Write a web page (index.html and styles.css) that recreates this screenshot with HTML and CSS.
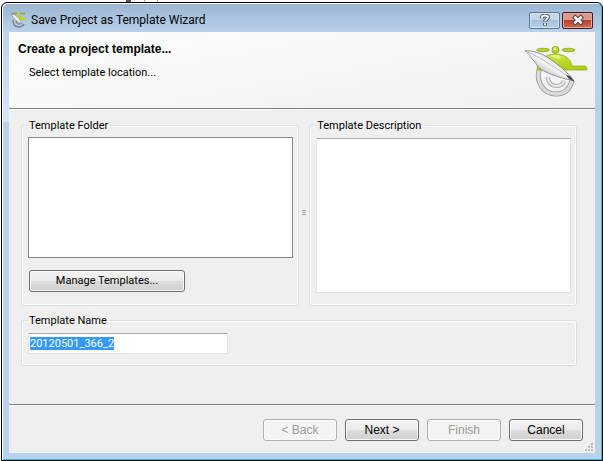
FILE: index.html
```html
<!DOCTYPE html>
<html lang="en">
<head>
<meta charset="utf-8">
<title>Save Project as Template Wizard</title>
<link rel="stylesheet" href="styles.css">
</head>
<body>
<div class="backdrop" aria-hidden="true"><i class="bar"></i><i class="page"></i></div>
<main class="window">
  <header class="titlebar">
    <svg class="app-icon" viewBox="0 0 16 16" aria-hidden="true">
      <path d="M2 8C2 12 4 15 8 15C10 15 12 14 13 12" fill="none" stroke="#7d8188" stroke-width="1.500"/>
      <path d="M5 9C5 11 7 12.500 9 12" fill="none" stroke="#6c7077"/>
      <path d="M4 7C5 3.500 10 3 12 6L16 6.500V8H4Z" fill="#bdd41f"/>
      <path d="M1 1.500H6M9 1.500H14" stroke="#93a51c" stroke-width="1.500"/>
      <circle cx="7.500" cy="2" r="1.500" fill="#bdd41f"/>
      <path d="M0 2C4 2 8 5 11 12C6 10 3 7 0 2Z" fill="#eef0f4" stroke="#777a82" stroke-width=".6"/>
    </svg>
    <span class="title">Save Project as Template Wizard</span>
    <button class="caption" aria-label="Help"><svg viewBox="0 0 12 12"><path d="M3 4.300V3Q3 1.500 6 1.500T9 3.500C9 5 6 5.500 6 7.500M6 9V11.500" fill="none" stroke="#46505c" stroke-width="3.800"/><path d="M3 4V3Q3 1.500 6 1.500T9 3.500C9 5 6 5.500 6 7.300M6 9.300V11" fill="none" stroke="#fff" stroke-width="1.800"/></svg></button>
    <button class="caption close" aria-label="Close"><svg viewBox="0 0 12 12"><path d="M1.500 2L10.500 10M10.500 2L1.500 10" stroke="#5b4148" stroke-width="4.600"/><path d="M2.300 2.700L9.700 9.300M9.700 2.700L2.300 9.300" stroke="#fff" stroke-width="2.600"/></svg></button>
  </header>
  <div class="client">
    <section class="banner">
      <div class="banner-text">
        <h1>Create a project template...</h1>
        <p>Select template location...</p>
      </div>
      <svg class="logo" viewBox="0 0 64 52" aria-hidden="true">
        <defs>
          <linearGradient id="green" x1="0" y1="0" x2="0" y2="1"><stop offset="0" stop-color="#cfe644"/><stop offset="1" stop-color="#a9cb12"/></linearGradient>
          <linearGradient id="quill" x1="0" y1="1" x2="1" y2="0"><stop offset=".2" stop-color="#a3a5ae"/><stop offset=".5" stop-color="#f4f5f7"/><stop offset="1" stop-color="#c9cbd2"/></linearGradient>
        </defs>
        <path d="M14 24C11 37 19 48 31 48C40 48 45 42 47 35" fill="none" stroke="#96989e" stroke-width="5"/>
        <path d="M14 24C11 37 19 48 31 48C40 48 45 42 47 35" fill="none" stroke="#d9dbdf" stroke-width="3.400"/>
        <path d="M23 31C23 37 27 40 31 40C35 40 38 38 39 35" fill="none" stroke="#a0a2a8" stroke-width="4"/>
        <path d="M23 31C23 37 27 40 31 40C35 40 38 38 39 35" fill="none" stroke="#e4e5e9" stroke-width="2.400"/>
        <path d="M12 24C13 15 18 11 24 9Q30 7 37 9C43 11 46 15 47 20H60Q62 20 62 24Z" fill="url(#green)" stroke="#94b01c" stroke-width=".8"/>
        <path d="M25 10Q31 7 37 11Q33 15 25 10Z" fill="#ecf6a8" opacity=".7"/>
        <ellipse cx="18" cy="4" rx="6.500" ry="1.700" fill="#b5d12b" stroke="#8aa51e" stroke-width=".8"/>
        <ellipse cx="43.500" cy="4" rx="6.500" ry="1.700" fill="#b5d12b" stroke="#8aa51e" stroke-width=".8"/>
        <circle cx="30.500" cy="4" r="3.600" fill="#b5d12b" stroke="#8aa51e" stroke-width=".8"/>
        <circle cx="30" cy="3" r="1.400" fill="#e6f39a"/>
        <path d="M0 5C6 4 17 7 25 13C35 20 42 26 49 35C38 32 24 29 14 22C11 19 11 16 8 14C5 11 5 8 0 5Z" fill="url(#quill)" stroke="#777a82" stroke-width=".8"/>
        <path d="M3 6C18 13 34 24 46 33" fill="none" stroke="#a6a9b0" stroke-width=".7"/>
        <path d="M41 29L45 30L50 36L44 33Z" fill="#45484f"/>
      </svg>
    </section>
    <form class="body" onsubmit="return false">
      <div class="split">
        <fieldset class="group folder">
          <legend id="folder-label">Template Folder</legend>
          <div class="list" role="listbox" aria-labelledby="folder-label" tabindex="0"></div>
          <button type="button" class="btn manage">Manage Templates...</button>
        </fieldset>
        <div class="grip" role="separator" aria-orientation="vertical"><i></i><i></i><i></i></div>
        <fieldset class="group description">
          <legend><label for="description">Template Description</label></legend>
          <textarea id="description"></textarea>
        </fieldset>
      </div>
      <fieldset class="group name">
        <legend><label for="name">Template Name</label></legend>
        <input id="name" type="text" value="20120501_366_2" autofocus>
      </fieldset>
    </form>
    <footer class="actions">
      <button class="btn" disabled>&lt; Back</button>
      <button class="btn">Next &gt;</button>
      <button class="btn" disabled>Finish</button>
      <button class="btn">Cancel</button>
      <svg class="sizer" viewBox="0 0 8 8" aria-hidden="true"><path d="M6 0h2v2h-2zM3 3h2v2h-2zM6 3h2v2h-2zM0 6h2v2h-2zM3 6h2v2h-2zM6 6h2v2h-2z" fill="#bdbdbd"/></svg>
    </footer>
  </div>
</main>
<script src="app.js"></script>
</body>
</html>
```
FILE: styles.css
```css
* { box-sizing: border-box; }
html, body { height: 100%; }
body {
  margin: 0;
  padding: 2px 0 0 1px;
  background: #fff;
  color: #000;
  font: 11px/14px Roboto, sans-serif;
  overflow: hidden;
}
.backdrop { position: absolute; top: 0; left: 126px; display: flex; gap: 13px; }
.bar { width: 5px; height: 2px; background: #555; }
.page { width: 14px; height: 2px; border: solid #aaa; border-width: 0 1px; }
.window {
  height: 100%;
  display: flex;
  flex-direction: column;
  padding: 0 7px 7px;
  border: 1px solid #000;
  border-radius: 6px 6px 0 0;
  background:
    linear-gradient(transparent 20px, #d9e6f6) 0 0 / 8px 119px no-repeat,
    linear-gradient(#9ab4d2, #b9d1ea 29px, #b9d1ea);
  box-shadow: inset 1px 1px #fff, inset -1px -1px #35b9dc;
}
.titlebar {
  flex: none;
  height: 29px;
  display: flex;
  align-items: center;
  gap: 2px;
  padding: 5px 2px 0 2px;
}
.app-icon { width: 16px; height: 16px; margin-right: 2px; }
.title { flex: 1; font: 12px/16px Roboto, sans-serif; }
.caption {
  width: 31px;
  height: 17px;
  display: grid;
  place-items: center;
  padding: 0;
  border: 1px solid #5c7693;
  border-radius: 2px;
  background: linear-gradient(#c4d6ea 45%, #a6bfdb 50%, #b9d0e9);
  box-shadow: inset 0 0 0 1px #d5e3f2;
}
.caption svg { width: 12px; height: 12px; }
.close {
  border-color: #4c1620;
  background: linear-gradient(#d99a8e 45%, #b9422e 50%, #cc6a55);
  box-shadow: inset 0 0 0 1px #e0aaa0;
}
.client {
  flex: 1;
  display: flex;
  flex-direction: column;
  background: #efefef;
}
.banner {
  flex: none;
  height: 76px;
  display: flex;
  justify-content: space-between;
  padding: 10px 6px 0 9px;
  background: linear-gradient(170deg, #fdfdfd, #f0f0f0);
}
h1 { margin: 0; font: bold 12px/14px "Liberation Sans", sans-serif; }
p { margin: 10px 0 0 11px; }
.logo { width: 64px; height: 52px; margin-top: 4px; }
.body {
  flex: 1;
  display: flex;
  flex-direction: column;
  gap: 7px;
  padding: 9px 18px 38px 12px;
  border-top: 1px solid #808080;
  box-shadow: inset 0 1px #fff;
}
.split { flex: 1; display: flex; }
.group {
  min-width: 0;
  margin: 0;
  border: 1px solid #d5dfe5;
  border-radius: 3px;
  box-shadow: inset 0 0 0 1px #fff;
}
legend { padding: 1px 3px 0 1px; margin: 0; }
.folder, .description { display: flex; flex-direction: column; }
.folder { flex: 278; padding: 4px 5px 13px 6px; }
.description { flex: 267; padding: 5px 5px 12px 6px; }
.list { flex: 1; border: 1px solid #828790; background: #fff; }
textarea, input {
  border: 1px solid #e2e3ea;
  border-top-color: #abadb3;
  border-radius: 1px;
  background: #fff;
  font: inherit;
  outline: 0;
}
textarea { flex: 1; width: 100%; resize: none; }
.name { padding: 5px 6px 11px; }
input { display: block; width: 200px; height: 21px; padding: 0 1px; }
::selection { background: #3399ff; color: #fff; }
.btn {
  width: 74px;
  height: 22px;
  padding: 0;
  border: 1px solid #707070;
  border-radius: 3px;
  background: linear-gradient(#f2f2f2, #ebebeb 50%, #dddddd 50%, #cfcfcf);
  box-shadow: inset 0 0 0 1px #fafafa;
  color: #000;
  font: 12px/14px "Liberation Sans", sans-serif;
}
.btn:disabled { border-color: #adb2b5; background: #f4f4f4; color: #9a9a9a; }
.manage { width: 156px; margin: 12px 0 0 1px; font: 11px/14px Roboto, sans-serif; }
.grip {
  width: 10px;
  display: flex;
  flex-direction: column;
  align-items: center;
  justify-content: center;
  gap: 1px;
}
.grip i { width: 4px; height: 1px; background: #a0a0a0; }
.actions {
  position: relative;
  flex: none;
  display: flex;
  justify-content: flex-end;
  gap: 8px;
  padding: 14px 12px 12px;
  border-top: 1px solid #808080;
  box-shadow: inset 0 1px #fff;
}
.sizer { position: absolute; right: 2px; bottom: 2px; width: 8px; height: 8px; }
```
FILE: app.js
```js
document.getElementById("name").select();
```
